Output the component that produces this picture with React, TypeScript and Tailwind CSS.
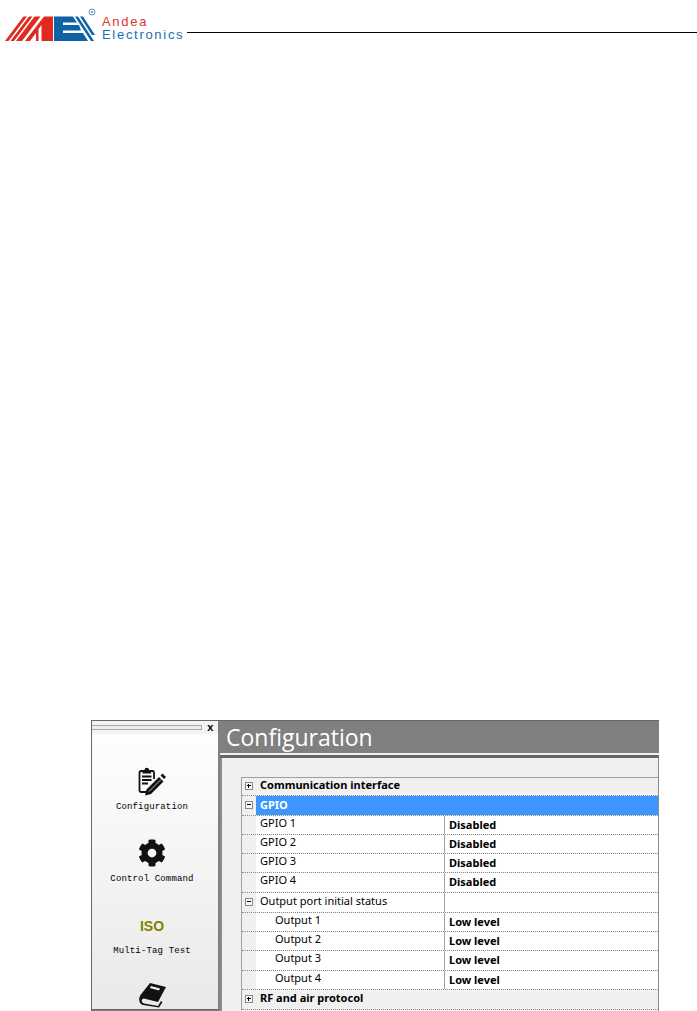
import React from "react";
import { FaCog } from "react-icons/fa";

function Logo() {
  return (
    <svg width="100" height="45" viewBox="0 0 100 45" className="shrink-0 block">
      <g fill="#de2a1f">
        <polygon points="5,41 8.500,41 27,16.500 23.500,16.500" />
        <polygon points="10.500,41 14,41 32.500,16.500 29,16.500" />
        <polygon points="16,41 22,41 40.500,16.500 34.500,16.500" />
        <polygon points="25,41 44,16.500 53,16.500 53,41 41.500,41 41.500,25 38.500,29 38.500,41 36,41 36,33 30,41" />
      </g>
      <g fill="#0f62a6">
        <polygon points="54,16.500 73,16.500 77,22.500 63,22.500 63,25 79,25 81,30.500 63,30.500 63,33 83,33 88,41 54,41" />
        <polygon points="75,16.500 78,16.500 94,41 91,41" />
        <polygon points="80,16.500 83,16.500 95,35 92,35" />
      </g>
      <circle cx="92" cy="12" r="3" fill="none" stroke="#5a7fb0" strokeWidth="0.9" />
      <circle cx="92" cy="12" r="1" fill="#5a7fb0" />
    </svg>
  );
}

function ClipboardPen() {
  return (
    <svg width="30" height="30" viewBox="0 0 30 30" className="block">
      <path d="M13 25H4C2 25 2.500 22 2.500 20V5.500A1.500 1.500 0 0 1 4 4H15.500A1.500 1.500 0 0 1 17 5.500V12" fill="none" stroke="#111" strokeWidth="1.800" />
      <path d="M5.500 3h2a2.300 2.300 0 0 1 4.600 0h2V6.500H5.500z" fill="#111" />
      <path d="M5 9.500h9.500M5 13h9.500M5 16.500h6" stroke="#111" strokeWidth="1.800" fill="none" />
      <path d="M8 28.500l1.500-6L22 10l4.500 4.500L14 27z" fill="#111" />
      <path d="M23.500 8.500l2-2 3.500 3.500-2 2z" fill="#111" />
      <path d="M12 24.500L24 12.500" stroke="#eee" strokeWidth="0.800" />
    </svg>
  );
}

function Book() {
  return (
    <svg width="27" height="25" viewBox="0 0 27 25" className="block">
      <path d="M11 0L27 4 19 19 5 15.500C2 15.500 2 20 5 20.500L19 23 22 18 23.500 19 20 24.500 4 22C0 21-1 16 1.500 12z" fill="#111" />
      <path d="M12 3l9 2.500-1 2-9-2.500z" fill="#f0f0f0" />
    </svg>
  );
}

function NavLabel({ children }: { children: React.ReactNode }) {
  return <div className="font-['Liberation_Mono',monospace] text-[9px] leading-[11px] tracking-[0.15px] text-black whitespace-nowrap">{children}</div>;
}

function Toggle({ open }: { open?: boolean }) {
  return (
    <span className="relative -top-px block w-[8px] h-[8px] border border-[#8a8a8a] bg-[#f8f8f8]">
      <span className="absolute left-[1px] top-[2px] w-[4px] h-px bg-black" />
      {!open && <span className="absolute left-[2px] top-[1px] w-px h-[4px] bg-black" />}
    </span>
  );
}

function GroupRow({ label, open, selected, bold = true, h = "h-[19px]", value }: { label: string; open?: boolean; selected?: boolean; bold?: boolean; h?: string; value?: boolean }) {
  return (
    <div className={`flex ${h} border-b border-dotted border-[#8c8c8c]`}>
      <div className="w-[14px] shrink-0 flex items-center justify-center bg-[#f0f0f0]">
        <Toggle open={open} />
      </div>
      <div className={`flex-1 flex items-center ${selected ? "bg-[#3c96fd] text-white" : value ? "bg-white text-black" : "bg-[#f0f0f0] text-black"}`}>
        <div className={`pl-[4px] ${value ? "w-[189px] h-full flex items-center border-r border-[#a0a0a0]" : ""} ${bold ? "font-bold" : ""}`}>
          <span className={`relative ${selected ? "-top-px" : "-top-[2px]"}`}>{label}</span>
        </div>
      </div>
    </div>
  );
}

function DataRow({ label, value, indent, h = "h-[19px]" }: { label: string; value: string; indent?: boolean; h?: string }) {
  return (
    <div className={`flex ${h} border-b border-dotted border-[#8c8c8c]`}>
      <div className="w-[14px] shrink-0 bg-[#f0f0f0]" />
      <div className="flex-1 flex bg-white">
        <div className={`w-[189px] shrink-0 border-r border-[#a0a0a0] flex items-center ${indent ? "pl-[19px]" : "pl-[4px]"}`}>
          <span className="relative -top-[3px]">{label}</span>
        </div>
        <div className="pl-[4px] flex items-center font-bold">
          <span className="relative -top-px">{value}</span>
        </div>
      </div>
    </div>
  );
}

export default function App() {
  return (
    <div className="w-[697px] h-[1011px] bg-white overflow-hidden">
      <header className="flex h-[720px] items-start">
        <div className="flex h-[45px] items-start w-full">
          <Logo />
          <div className="ml-[2px] pt-[15px] font-['Liberation_Sans',sans-serif] text-[13px] leading-[13px] tracking-[1.7px] whitespace-nowrap">
            <div className="text-[#e0352b]">Andea</div>
            <div className="text-[#1a6fb0]">Electronics</div>
          </div>
          <div className="flex-1 ml-[3px] mt-[32px] h-px bg-black" />
        </div>
      </header>
      <div className="ml-[91px] w-[568px] h-[291px] flex border-t border-l border-[#666] bg-[#808080]">
        <aside className="w-[126px] h-[289px] shrink-0 overflow-hidden border-b border-[#666] bg-linear-to-b from-white to-[#e9e9e9] flex flex-col">
          <div className="h-[13px] shrink-0 flex items-center bg-[#f3f3f3]">
            <div className="w-[110px] h-[5px] border-y border-r border-[#a8a8a8] bg-[#eee]" />
            <span className="ml-[5px] font-['Liberation_Mono',monospace] font-bold text-[11px] leading-[10px]">x</span>
          </div>
          <div className="pr-[6px] flex flex-col">
            <div className="h-[105px] shrink-0 flex flex-col items-center pt-[33px]">
              <ClipboardPen />
              <div className="mt-[5px]"><NavLabel>Configuration</NavLabel></div>
            </div>
            <div className="h-[77px] shrink-0 flex flex-col items-center">
              <FaCog size={28} color="#111" />
              <div className="mt-[7px]"><NavLabel>Control Command</NavLabel></div>
            </div>
            <div className="h-[67px] shrink-0 flex flex-col items-center">
              <div className="font-['Liberation_Sans',sans-serif] font-bold text-[14px] leading-[20px] text-[#808000]">ISO</div>
              <div className="mt-[10px]"><NavLabel>Multi-Tag Test</NavLabel></div>
            </div>
            <div className="flex flex-col items-center">
              <Book />
            </div>
          </div>
        </aside>
        <main className="flex-1 ml-[2px] flex flex-col min-w-0">
          <div className="h-[32px] shrink-0 flex items-center pl-[6px] font-['Open_Sans',sans-serif] text-[23px] leading-[32px] text-white">Configuration</div>
          <div className="h-[2px] bg-[#f0f0f0]" />
          <div className="h-[3px] bg-[#666]" />
          <div className="flex-1 bg-[#f0f0f0] border-l-[2px] border-r border-[#8c8c8c] pt-[19px] pl-[19px]">
            <div className="border-t border-l border-[#a0a0a0] font-['Noto_Sans',sans-serif] text-[11px] leading-[13px] text-black">
              <GroupRow label="Communication interface" h="h-[18px]" />
              <GroupRow label="GPIO" open selected h="h-[20px]" />
              <DataRow label="GPIO 1" value="Disabled" />
              <DataRow label="GPIO 2" value="Disabled" />
              <DataRow label="GPIO 3" value="Disabled" />
              <DataRow label="GPIO 4" value="Disabled" h="h-[20px]" />
              <GroupRow label="Output port initial status" open bold={false} h="h-[20px]" value />
              <DataRow label="Output 1" value="Low level" indent />
              <DataRow label="Output 2" value="Low level" indent />
              <DataRow label="Output 3" value="Low level" indent h="h-[20px]" />
              <DataRow label="Output 4" value="Low level" indent />
              <GroupRow label="RF and air protocol" h="h-[20px]" />
            </div>
          </div>
        </main>
      </div>
    </div>
  );
}
